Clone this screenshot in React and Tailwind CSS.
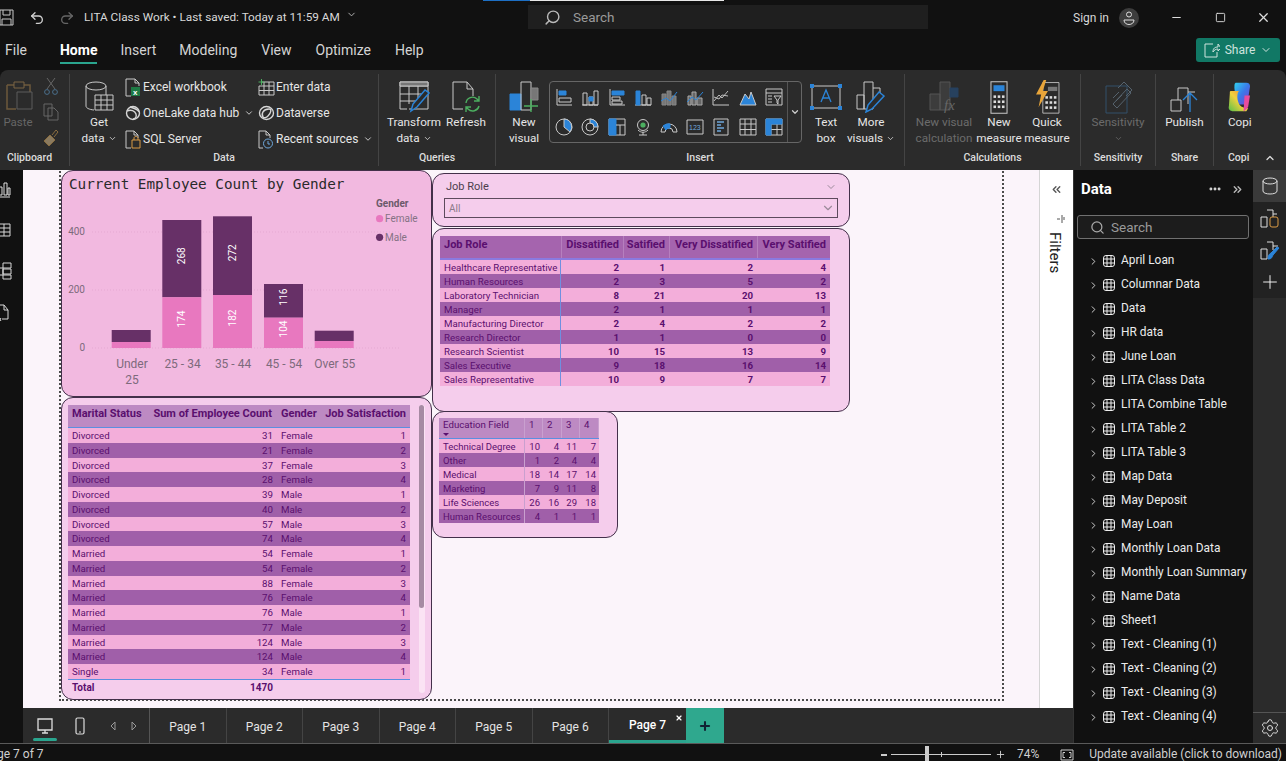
import React from 'react';
import { ChevronDown, ChevronRight, ChevronUp, ChevronsLeft, ChevronsRight, Search, Settings, Minus, Square, X, Plus, MoreHorizontal, Undo2, Redo2 } from 'lucide-react';

const BLUE = '#2b84d8';
const LINE = '#c9c9c9';

const Svg = ({ w, h, vw, vh, className, children, stroke = LINE, sw = 1 }) => (
  <svg width={w} height={h} viewBox={`0 0 ${vw || w} ${vh || h}`} fill="none" stroke={stroke} strokeWidth={sw} className={className}>
    {children}
  </svg>
);

// ribbon large icons
const PasteIcon = () => (
  <Svg w={30} h={34} stroke="#6d5a3c">
    <path d="M2 5h7M19 5h6v7M2 5v24h9" strokeWidth="1.5" />
    <path d="M9 2h10v6H9z" stroke="#7a6545" />
    <path d="M12 12h15v17H12z" stroke="#5c5c5c" fill="#2b2b2b" />
  </Svg>
);
const GetDataIcon = () => (
  <Svg w={29} h={34}>
    <ellipse cx="11" cy="6" rx="10" ry="4" />
    <path d="M1 6v20c0 2 3 3.5 8 4M21 6v9" />
    <path d="M10 15h18v15H10zM10 20h18M10 25h18M16 15v15M22 15v15" fill="#2b2b2b" />
  </Svg>
);
const TransformIcon = () => (
  <Svg w={31} h={32}>
    <path d="M1 1h28v27H10M1 1v27h7M1 5h28M1 13h26M1 20h18M10 5v18M19 5v12" />
    <path d="M1 1h28v4H1z" fill="#777" />
    <path d="M12 30l2-7 12-14 4 3-12 14z" stroke={BLUE} strokeWidth="1.5" fill="#2b2b2b" />
  </Svg>
);
const RefreshIcon = () => (
  <Svg w={29} h={32}>
    <path d="M1 1h14l6 7v7M15 1v7h6M1 1v27h10" />
    <path d="M14 22a6.5 6.5 0 0 1 11-4l1.5 1.5M27 25a6.5 6.5 0 0 1-11 3l-1.5-1.5M27 15v5h-5M14 31v-5h5" stroke="#4caf60" strokeWidth="1.4" />
  </Svg>
);
const NewVisualIcon = () => (
  <Svg w={30} h={32}>
    <path d="M1 13h11v16H1z" fill={BLUE} stroke={BLUE} />
    <path d="M12 1h10v28H12z" />
    <path d="M22 7h7v12h-7z" fill="#777" stroke="#888" />
    <path d="M22 18v13M15 25h14" stroke="#4caf60" strokeWidth="1.4" />
  </Svg>
);
const TextBoxIcon = () => (
  <Svg w={32} h={26}>
    <path d="M2 2h28v22H2z" />
    <path d="M11 18l5-12 5 12M13 14h6" stroke={BLUE} strokeWidth="1.3" />
    <g fill={BLUE} stroke="none"><rect width="4" height="4" /><rect x="28" width="4" height="4" /><rect y="22" width="4" height="4" /><rect x="28" y="22" width="4" height="4" /></g>
  </Svg>
);
const MoreVisualsIcon = () => (
  <Svg w={31} h={32}>
    <path d="M1 14h7v14H1zM8 1h9v27H8zM17 7h7v8" />
    <path d="M10 31l2-7 11-13 5 4-12 13z" stroke={BLUE} strokeWidth="1.5" fill="#2b2b2b" />
  </Svg>
);
const VisualCalcIcon = () => (
  <Svg w={30} h={32} stroke="#555">
    <path d="M1 13h10v16H1zM11 1h10v28H11z" fill="#3c3c3c" />
    <path d="M21 7h8v9h-8z" fill="#27415e" stroke="#27415e" />
    <text x="15" y="29" fontSize="15" fontStyle="italic" fontFamily="Liberation Serif, serif" fill="#666" stroke="none">fx</text>
  </Svg>
);
const NewMeasureIcon = () => (
  <Svg w={18} h={33} vw={21} vh={39}>
    <path d="M1 1h19v37H1z" strokeWidth="1.2" />
    <path d="M4 5h13v7H4z" fill={BLUE} stroke="none" />
    <g fill="#ddd" stroke="none">
      {[17, 23, 29].map((y) => [4, 9, 14].map((x) => <rect key={`${x}${y}`} x={x} y={y} width="3" height="3" />))}
    </g>
  </Svg>
);
const QuickMeasureIcon = () => (
  <Svg w={29} h={34} vw={29} vh={40}>
    <g transform="translate(8 2)">
      <path d="M1 1h19v36H1z" />
      <path d="M7 6h11v5H7z" fill="#777" stroke="none" />
      <g fill="#ddd" stroke="none">
        {[17, 23, 29].map((y) => [4, 9, 14].map((x) => <rect key={`${x}${y}`} x={x} y={y} width="3" height="3" />))}
      </g>
    </g>
    <path d="M10 0L1 17h6l-3 15 11-19H9l4-13z" fill="#e8a53a" stroke="none" />
  </Svg>
);
const SensitivityIcon = () => (
  <Svg w={34} h={34} stroke="#33506b">
    <path d="M5 6h21v27H5z" />
    <path d="M12 24l14-15 4 4-14 15zM17 8l6-6 8 8-6 6" stroke="#56636e" />
    <path d="M12 18l6-6M15 21l6-6" stroke="#56636e" />
  </Svg>
);
const PublishIcon = () => (
  <Svg w={30} h={32}>
    <path d="M1 19h10v11H1zM8 19V7h10v16M18 11h7" />
    <path d="M20 31V12M13 19l7-7 7 7" stroke={BLUE} strokeWidth="1.3" />
  </Svg>
);
const CopilotIcon = () => (
  <svg width="22" height="30" viewBox="0 0 24 40" preserveAspectRatio="none" className="block">
    <defs>
      <linearGradient id="cp1" x1="0" y1="0" x2="1" y2="1"><stop offset="0" stopColor="#2fd0f0" /><stop offset="0.5" stopColor="#3b78e8" /><stop offset="1" stopColor="#7d3fd0" /></linearGradient>
      <linearGradient id="cp2" x1="0" y1="1" x2="1" y2="0"><stop offset="0" stopColor="#58c04a" /><stop offset="0.5" stopColor="#f2d13c" /><stop offset="1" stopColor="#f07f3c" /></linearGradient>
    </defs>
    <path d="M9 1h11c3 0 4 2 4 5L21 30H9L7 8c0-4 0-7 2-7z" fill="url(#cp1)" />
    <path d="M3 12h9c-3 4-2 14 1 19 2 3 6 4 9 4l-2 4H6c-4 0-6-3-5-7l1-17c0-2 0-3 1-3z" fill="url(#cp2)" />
    <path d="M18 18h6l-2 15c-1 3-3 5-5 6l1-21z" fill="#e84b9c" />
  </svg>
);

// small list icons of the Data group
const ExcelIcon = () => (
  <Svg w={16} h={19}>
    <path d="M1 1h9l4 4v3M10 1v4h4M1 1v17h5" />
    <path d="M6 9h9v9H6z" fill="#1e7a45" stroke="none" />
    <text x="8" y="17" fontSize="8" fontWeight="700" fill="#fff" stroke="none" fontFamily="Liberation Sans, sans-serif">x</text>
  </Svg>
);
const OneLakeIcon = () => (
  <Svg w={16} h={16} stroke="#d6d6d6" sw={1.4}>
    <circle cx="8" cy="8" r="6.5" />
    <path d="M2 6c4-2 8 0 9 3s-1 5-3 5M5 2c3 1 8 2 9 5" />
  </Svg>
);
const SqlIcon = () => (
  <Svg w={16} h={19}>
    <path d="M1 1h8l4 4v3M9 1v4h4M1 1v17h5" />
    <path d="M7 10h8v8H7zM9 10V8c0-2 4-2 4 0v2" stroke="#d99a45" />
  </Svg>
);
const EnterDataIcon = () => (
  <Svg w={17} h={17}>
    <path d="M4 3h12v13H1V7M1 7h15M1 11.5h15M6 3v13M11 3v13" />
    <path d="M3.5 0v6M0.5 3h6" stroke="#4caf60" />
  </Svg>
);
const DataverseIcon = () => (
  <Svg w={17} h={16} stroke="#d6d6d6" sw={1.4}>
    <ellipse cx="8.5" cy="8" rx="7" ry="6.5" />
    <path d="M5 12c-2-3 0-8 6-8 3 0 2 4-1 7-2 2-4 2-5 1z" />
  </Svg>
);
const RecentIcon = () => (
  <Svg w={15} h={19}>
    <path d="M1 1h7l4 4v3M8 1v4h4M1 1v17h4" />
    <circle cx="10" cy="13.5" r="4.5" stroke="#6fa8dc" />
    <path d="M10 11v3h2" stroke="#6fa8dc" />
  </Svg>
);

// visual gallery
const Box = ({ children }) => <Svg w={18} h={18}>{children}</Svg>;
const gallery = [
  <Box><path d="M2 1v16h15" /><path d="M4 3h7v4H4z" fill={BLUE} stroke={BLUE} /><path d="M4 10h12v4H4z" fill="none" /></Box>,
  <Box><path d="M1 17h16M2 5h4v12H2zM8 9h4v8H8zM13 3h4v14h-4z" /><path d="M8 9h4v4H8z" fill={BLUE} stroke={BLUE} /></Box>,
  <Box><path d="M2 1v16h15" /><path d="M4 3h12v4H4z" fill={BLUE} stroke={BLUE} /><path d="M4 9h8v3H4zM4 13h10v3H4z" /></Box>,
  <Box><path d="M1 17h16" /><path d="M2 3h4v14H2z" fill={BLUE} stroke={BLUE} /><path d="M8 7h4v10H8zM13 10h4v7h-4z" /></Box>,
  <Box><path d="M2 6h4v11H2zM7 3h4v14H7zM12 8h4v9h-4z" fill="#777" stroke="#888" /><path d="M1 13l5-3 4 3 7-9" stroke={BLUE} /></Box>,
  <Box><path d="M2 8h3v9H2zM6 4h4v13H6zM11 10h5v7h-5z" fill="#666" stroke="#aaa" /><path d="M1 14l5-5 4 3 7-8" stroke={BLUE} /></Box>,
  <Box><path d="M1 1v16h16" /><path d="M2 13l5-6 3 3 6-7M2 9l5 2 3-4 6 1" strokeWidth="0.9" /></Box>,
  <Box><path d="M1 17l5-11 4 5 2-7 5 13z" fill={BLUE} stroke={LINE} /></Box>,
  <Box><path d="M1 1h16v16H1zM1 5h16" /><path d="M3 8h4M3 11h4M3 14h4M9 8h7l-3 4v4l-1-1v-3z" /></Box>,
  <Box><circle cx="9" cy="9" r="8" /><path d="M9 9V1a8 8 0 0 1 6 13z" fill={BLUE} stroke={LINE} /></Box>,
  <Box><circle cx="9" cy="9" r="8" /><circle cx="9" cy="9" r="4" /><path d="M9 1a8 8 0 0 1 8 8h-4a4 4 0 0 0-4-4z" fill={BLUE} /></Box>,
  <Box><path d="M1 1h16v16H1z" /><path d="M1 1h7v16H1z" fill={BLUE} stroke={BLUE} /><path d="M8 7h9M12 7v10" /></Box>,
  <Box><circle cx="9" cy="7" r="5.5" /><circle cx="9" cy="7" r="2.6" fill="#4caf60" stroke="none" /><path d="M4 12c3 3 7 3 10 0M9 14v3M5 17h8" /></Box>,
  <Box><path d="M1 14a8 8 0 0 1 16 0h-4a4 4 0 0 0-8 0z" /><path d="M3 8a8 8 0 0 1 7-2v4a4 4 0 0 0-4 2z" fill={BLUE} stroke={BLUE} /></Box>,
  <Box><path d="M1 2h16v14H1z" /><text x="3" y="12" fontSize="7" fill="#6fa8dc" stroke="none" fontFamily="Liberation Sans, sans-serif">123</text></Box>,
  <Box><path d="M2 1h14v16H2z" /><path d="M5 4h7M5 7h4M5 10h7M5 13h4" stroke="#6fa8dc" strokeWidth="1.3" /></Box>,
  <Box><path d="M1 1h16v16H1zM1 6h16M1 11.5h16M6 1v16M12 1v16" /></Box>,
  <Box><path d="M1 1h16v16H1zM1 6h16M1 11.5h16M6 1v16M12 1v16" stroke={LINE} /><path d="M1 1h16v5H1zM1 6h5v11H1z" fill={BLUE} stroke={BLUE} /></Box>,
];

const TableIcon = () => (
  <svg width="12" height="12" viewBox="0 0 12 12" fill="none" stroke="#eee" strokeWidth="1" className="shrink-0">
    <rect x="0.5" y="0.5" width="11" height="11" rx="2.5" />
    <path d="M4 0.5v11M8 0.5v11M0.5 4h11M0.5 8h11" />
  </svg>
);

const Big = ({ icon, lines, w, chevron, muted, className = '' }) => (
  <div className={`flex flex-col items-center shrink-0 ${className}`} style={{ width: w }}>
    <div className="h-[34px] flex items-center justify-center">{icon}</div>
    <div className={`text-[11.7px] leading-[16px] text-center whitespace-nowrap ${muted ? 'text-[#6b6b6b]' : 'text-[#e6e6e6]'}`}>
      {lines.map((l, i) => (
        <div key={l} className="flex items-center justify-center gap-[3px] h-[16px]">
          {l}
          {chevron && i === lines.length - 1 && <ChevronDown size={9} />}
        </div>
      ))}
    </div>
  </div>
);

const Group = ({ label, w, sep = true, children, labelClass = '' }) => (
  <div className={`h-[92px] mt-[4px] shrink-0 flex flex-col ${sep ? 'border-r border-[#444]' : ''}`} style={{ width: w }}>
    <div className="h-[71px] flex items-start">{children}</div>
    <div className={`text-[10.5px] leading-[16px] mt-[5px] text-center font-medium text-[#dcdcdc] ${labelClass}`}>{label}</div>
  </div>
);

const ListRow = ({ icon, text, chevron }) => (
  <div className="h-[26px] flex items-center text-[12px] text-[#e6e6e6] whitespace-nowrap">
    <div className="w-[18px] shrink-0 flex items-center">{icon}</div>
    {text}
    {chevron && <ChevronDown size={10} className="ml-[5px]" />}
  </div>
);

const Ribbon = () => (
  <div className="h-[100px] bg-[#2b2b2b] rounded-t-[8px] flex shrink-0">
    <Group label="Clipboard" w={70} labelClass="pr-[10px]">
      <div className="w-[40px] mt-[6px] flex flex-col items-center">
        <div className="h-[34px] flex items-center"><PasteIcon /></div>
        <span className="text-[11.5px] leading-[16px] pr-[4px] text-[#666]">Paste</span>
      </div>
      <div className="flex flex-col items-center gap-[8px] mt-[3px] ml-[3px]">
        <Svg w={14} h={18} stroke="#666"><path d="M3 1l8 11M11 1L3 12" /><circle cx="3" cy="15" r="2.4" stroke="#4a6f8c" /><circle cx="11" cy="15" r="2.4" stroke="#4a6f8c" /></Svg>
        <Svg w={16} h={18} stroke="#666"><path d="M1 1h8v12H1zM5 5h6l4 4v8H5z" fill="#2b2b2b" /></Svg>
        <Svg w={16} h={18} stroke="#8a6d3f"><path d="M9 6l4-5 2 2-4 5" /><path d="M1 12l6-6 5 5-6 6z" fill="#8a7a5f" /></Svg>
      </div>
    </Group>
    <Group label="Data" w={309}>
      <div className="ml-[4px] mt-[6px]"><Big icon={<GetDataIcon />} lines={['Get', 'data']} chevron w={50} /></div>
      <div className="ml-[1px] w-[133px]">
        <ListRow icon={<ExcelIcon />} text="Excel workbook" />
        <ListRow icon={<OneLakeIcon />} text="OneLake data hub" chevron />
        <ListRow icon={<SqlIcon />} text="SQL Server" />
      </div>
      <div className="w-[118px]">
        <ListRow icon={<EnterDataIcon />} text="Enter data" />
        <ListRow icon={<DataverseIcon />} text="Dataverse" />
        <ListRow icon={<RecentIcon />} text="Recent sources" chevron />
      </div>
    </Group>
    <Group label="Queries" w={117}>
      <div className="ml-[9px] mt-[6px] flex gap-[6px]">
        <Big icon={<TransformIcon />} lines={['Transform', 'data']} chevron w={52} />
        <Big icon={<RefreshIcon />} lines={['Refresh']} w={40} />
      </div>
    </Group>
    <Group label="Insert" w={409}>
      <div className="ml-[8px] mt-[6px]"><Big icon={<NewVisualIcon />} lines={['New', 'visual']} w={40} /></div>
      <div className="ml-[5px] mt-[7px] w-[253px] h-[62px] border border-[#666] rounded-[4px] flex">
        <div className="w-[237px] grid grid-cols-9 grid-rows-2 items-center justify-items-center pl-[1px]">
          {gallery.map((g, i) => <div key={i} className="flex">{g}</div>)}
        </div>
        <div className="flex-1 border-l border-[#555] flex items-center justify-center"><ChevronDown size={10} strokeWidth={3} className="text-[#ccc]" /></div>
      </div>
      <div className="ml-[6px] mt-[6px] flex gap-[2px]">
        <Big icon={<TextBoxIcon />} lines={['Text', 'box']} w={36} />
        <Big icon={<MoreVisualsIcon />} lines={['More', 'visuals']} chevron w={50} />
      </div>
    </Group>
    <Group label="Calculations" w={176}>
      <div className="ml-[7px] mt-[6px] flex">
        <Big icon={<VisualCalcIcon />} lines={['New visual', 'calculation']} muted w={64} />
        <Big icon={<NewMeasureIcon />} lines={['New', 'measure']} w={46} />
        <Big icon={<QuickMeasureIcon />} lines={['Quick', 'measure']} w={50} />
      </div>
    </Group>
    <Group label="Sensitivity" w={75}>
      <div className="mt-[6px] w-full">
        <Big icon={<SensitivityIcon />} lines={['Sensitivity', '']} chevron muted w="100%" />
      </div>
    </Group>
    <Group label="Share" w={58}>
      <div className="mt-[6px] w-full"><Big icon={<PublishIcon />} lines={['Publish']} w="100%" /></div>
    </Group>
    <div className="h-[92px] mt-[4px] flex-1 flex flex-col">
      <div className="h-[71px] pt-[8px] pl-[14px] overflow-hidden">
        <CopilotIcon />
        <div className="text-[11.7px] leading-[16px] text-[#e6e6e6] mt-[2px]">Copi</div>
      </div>
      <div className="flex items-center mt-[5px] pl-[14px] gap-[15px] text-[10.5px] leading-[16px] font-medium text-[#dcdcdc]">
        Copi
        <ChevronUp size={12} strokeWidth={2.5} />
      </div>
    </div>
  </div>
);

const TitleBar = () => (
  <div className="h-[35px] flex items-center relative shrink-0">
    <div className="absolute top-0 left-[483px] w-[47px] h-[1px] bg-[#1d6fc4]" />
    <div className="absolute top-0 left-[530px] w-[194px] h-[1px] bg-[#e8e8e8]" />
    <Svg w={15} h={17} className="shrink-0 ml-[-1px]">
      <path d="M1 1h13v15H1zM4 1v5h7V1M3 16v-6h9v6" />
    </Svg>
    <Undo2 size={16} className="ml-[15px] text-[#d0d0d0]" />
    <Redo2 size={16} className="ml-[14px] text-[#666]" />
    <span className="ml-[9px] text-[11.8px] text-[#d8d8d8] whitespace-nowrap">LITA Class Work • Last saved: Today at 11:59 AM</span>
    <ChevronDown size={11} className="ml-[6px] mt-[-6px] text-[#bbb]" />
    <div className="absolute left-[528px] top-[5px] w-[400px] h-[24px] bg-[#1f1f1f] flex items-center pl-[16px]">
      <Search size={17} className="text-[#bbb] scale-x-[-1]" />
      <span className="ml-[12px] text-[13.5px] text-[#9a9a9a]">Search</span>
    </div>
    <div className="ml-auto flex items-center h-full">
      <span className="text-[12px] text-[#d8d8d8]">Sign in</span>
      <div className="ml-[10px] w-[20px] h-[20px] rounded-full bg-[#3d3d3d] flex items-center justify-center">
        <Svg w={12} h={14} stroke="#ddd"><circle cx="6" cy="3.5" r="2.5" /><path d="M1 9h10c0 6-10 6-10 0z" /></Svg>
      </div>
      <Minus size={13} className="ml-[31px] text-[#ddd]" />
      <Square size={11} className="ml-[32px] text-[#ddd]" />
      <X size={15} className="ml-[30px] mr-[15px] text-[#ddd]" />
    </div>
  </div>
);

const TabBar = () => (
  <div className="h-[35px] flex items-start relative shrink-0 text-[14px] leading-[30px] text-[#d4d4d4]">
    <span className="ml-[5px]">File</span>
    <span className="ml-[33px] font-bold text-white border-b-2 border-[#2aa58e] h-[29px]">Home</span>
    <span className="ml-[23px]">Insert</span>
    <span className="ml-[23px]">Modeling</span>
    <span className="ml-[24px]">View</span>
    <span className="ml-[24px]">Optimize</span>
    <span className="ml-[24px]">Help</span>
    <div className="ml-auto mr-[6px] mt-[3px] w-[84px] h-[24px] rounded-[3px] bg-[#117865] flex items-center justify-center gap-[5px] text-[12px] leading-[24px] text-[#cfe3de]">
      <Svg w={16} h={15} stroke="#cfe3de"><path d="M9 1h-8v13h12V9M9 9c0-4 2-5 5-5V1l3 4-3 3V6c-2 0-4 1-5 3z" /></Svg>
      Share
      <ChevronDown size={12} />
    </div>
  </div>
);

const LeftRail = () => (
  <div className="w-[23px] shrink-0 bg-[#111] flex flex-col gap-[24px] pt-[12px] overflow-hidden">
    <Svg w={12} h={16} className="ml-[-1px]" stroke="#e0e0e0">
      <path d="M0 5h3v8H0zM5 1h3v12H5zM9 6h2v7H9zM0 15h11" />
    </Svg>
    <Svg w={12} h={16} className="ml-[-1px]" stroke="#d8d8d8"><path d="M-1 2h12v12H-1zM-1 6h12M-1 10h12M5 2v12" /></Svg>
    <Svg w={13} h={18} className="ml-[-1px]" stroke="#d8d8d8"><path d="M-1 6h5v7h-5zM4 1h8v5H4zM4 7h8v5H4zM4 13h8v4H4z" /></Svg>
    <Svg w={11} h={18} className="ml-[-1px]" stroke="#d8d8d8"><path d="M-1 1h6l4 5v9H3M5 1v5h4" /><path d="M0 14l2 3M2 14l-2 3" /></Svg>
  </div>
);

// report canvas
const ChartCard = () => (
  <div className="absolute left-[38px] top-0 w-[371px] h-[227px] rounded-[12px] border border-[#43304a] bg-[#f2b9e0] overflow-hidden">
    <div className="h-[28px] pl-[7px] pt-[3px] font-['DejaVu_Sans_Mono',monospace] text-[14.3px] leading-[20px] text-[#2a2a2a] whitespace-nowrap">Current Employee Count by Gender</div>
    <svg width="369" height="197" viewBox="62 199 369 197" fontFamily="Roboto, sans-serif" className="block">
      {[232, 290, 348].map((y) => <path key={y} d={`M92 ${y}H400`} stroke="#e5a9d2" strokeDasharray="1 2" />)}
      {[['400', 231.7], ['200', 289.7], ['0', 347.7]].map(([t, y]) => <text key={t} x="85" y={y + 3.5} textAnchor="end" fontSize="10" fill="#7d6a7c">{t}</text>)}
      {[[111.7, 330, 342], [162.3, 220, 297.3], [213, 216.3, 295], [264, 284, 317.7], [314.7, 330.7, 341]].map(([x, top, mid]) => (
        <g key={x}>
          <rect x={x} y={top} width="39" height={mid - top} fill="#673067" />
          <rect x={x} y={mid} width="39" height={348 - mid} fill="#e878bf" />
        </g>
      ))}
      {[['268', 181.8, 255.7], ['174', 181.8, 319], ['272', 232.6, 252.7], ['182', 232.6, 318], ['116', 283.6, 297], ['104', 283.6, 329]].map(([t, x, y]) => (
        <text key={t} transform={`translate(${x} ${y}) rotate(-90)`} y="3.5" textAnchor="middle" fontSize="10" fill="#fff">{t}</text>
      ))}
      <g fontSize="12" fill="#7d6a7c" textAnchor="middle">
        <text x="132" y="368">Under</text>
        <text x="132" y="384">25</text>
        <text x="182.5" y="368">25 - 34</text>
        <text x="233" y="368">35 - 44</text>
        <text x="284" y="368">45 - 54</text>
        <text x="334.7" y="368">Over 55</text>
      </g>
      <text x="376" y="207" fontSize="10" fontWeight="700" fill="#6b5a6a">Gender</text>
      <circle cx="379.6" cy="218.7" r="3.6" fill="#e878bf" />
      <text x="385" y="222" fontSize="10" fill="#857284">Female</text>
      <circle cx="379.6" cy="237.3" r="3.6" fill="#673067" />
      <text x="385" y="241" fontSize="10" fill="#857284">Male</text>
    </svg>
  </div>
);

const maritalRows = [
  ['Divorced', 31, 'Female', 1], ['Divorced', 21, 'Female', 2], ['Divorced', 37, 'Female', 3], ['Divorced', 28, 'Female', 4],
  ['Divorced', 39, 'Male', 1], ['Divorced', 40, 'Male', 2], ['Divorced', 57, 'Male', 3], ['Divorced', 74, 'Male', 4],
  ['Married', 54, 'Female', 1], ['Married', 54, 'Female', 2], ['Married', 88, 'Female', 3], ['Married', 76, 'Female', 4],
  ['Married', 76, 'Male', 1], ['Married', 77, 'Male', 2], ['Married', 124, 'Male', 3], ['Married', 124, 'Male', 4],
  ['Single', 34, 'Female', 1],
];

const MaritalTable = () => (
  <div className="absolute left-[38px] top-[227px] w-[371px] h-[303px] rounded-[12px] border border-[#43304a] bg-[#f5cdec] pl-[6px] pt-[7px]">
    <div className="w-[342px] text-[#5a0f6e]">
      <div className="h-[23px] pb-[5px] bg-[#bd8ac3] border-b border-[#5b8fe0] grid grid-cols-[79px_130px_45px_88px] items-center text-[11px] font-bold leading-none whitespace-nowrap">
        <span className="pl-[4px]">Marital Status</span>
        <span className="text-right pr-[5px]">Sum of Employee Count</span>
        <span className="pl-[4px]">Gender</span>
        <span className="text-right pr-[4px]">Job Satisfaction</span>
      </div>
      {maritalRows.map((r, i) => (
        <div key={i} className={`h-[14.75px] pt-[1px] grid grid-cols-[79px_130px_45px_88px] items-center text-[9.7px] leading-none ${i % 2 ? 'bg-[#a05fa9]' : 'bg-[#f3aeda]'}`}>
          <span className="pl-[4px]">{r[0]}</span>
          <span className="text-right pr-[4px]">{r[1]}</span>
          <span className="pl-[4px]">{r[2]}</span>
          <span className="text-right pr-[4px]">{r[3]}</span>
        </div>
      ))}
      <div className="h-[17px] border-t border-[#5b8fe0] grid grid-cols-[79px_130px_45px_88px] items-center text-[10px] font-bold leading-none">
        <span className="pl-[4px]">Total</span>
        <span className="text-right pr-[4px]">1470</span>
      </div>
    </div>
    <div className="absolute left-[357px] top-[7px] w-[6px] h-[288px] rounded-full bg-[#fbe3f4]">
      <div className="w-[5px] h-[203px] rounded-full bg-[#a68aa3]" />
    </div>
  </div>
);

const JobSlicer = () => (
  <div className="absolute left-[409px] top-[3px] w-[418px] h-[54px] rounded-[12px] border border-[#43304a] bg-[#f5cdec] pl-[11px] pr-[11px]">
    <div className="h-[24px] pt-[2px] flex items-center justify-between pl-[2px] pr-[1px] text-[11px] text-[#4c3e4c]">
      Job Role
      <ChevronDown size={12} className="text-[#9b8a9a]" />
    </div>
    <div className="h-[20px] border border-[#5d4a5d] flex items-center justify-between pl-[4px] pr-[2px] text-[10px] text-[#8a7a88]">
      All
      <ChevronDown size={14} className="text-[#9b8a9a]" />
    </div>
  </div>
);

const roleRows = [
  ['Healthcare Representative', 2, 1, 2, 4], ['Human Resources', 2, 3, 5, 2], ['Laboratory Technician', 8, 21, 20, 13],
  ['Manager', 2, 1, 1, 1], ['Manufacturing Director', 2, 4, 2, 2], ['Research Director', 1, 1, 0, 0],
  ['Research Scientist', 10, 15, 13, 9], ['Sales Executive', 9, 18, 16, 14], ['Sales Representative', 10, 9, 7, 7],
];

const RoleMatrix = () => (
  <div className="absolute left-[409px] top-[58px] w-[418px] h-[184px] rounded-[12px] border border-[#43304a] bg-[#f5cdec] pl-[7px] pt-[7px]">
    <div className="w-[390px] text-[#5a0f6e]">
      <div className="h-[24px] bg-[#a564ae] border-b-2 border-[#8a7ae0] grid grid-cols-[121px_62px_46px_88px_73px] items-center text-[11px] font-bold leading-none whitespace-nowrap">
        <span className="pl-[4px] pb-[5px]">Job Role</span>
        {['Dissatified', 'Satified', 'Very Dissatified', 'Very Satified'].map((h) => (
          <span key={h} className="h-full pb-[5px] flex items-center justify-end pr-[4px] border-l border-[#b67fbe]">{h}</span>
        ))}
      </div>
      {roleRows.map((r, i) => (
        <div key={r[0]} className={`h-[14px] grid grid-cols-[121px_62px_46px_88px_73px] items-center leading-none text-[9.7px] ${i % 2 ? 'bg-[#a05fa9]' : 'bg-[#f3aeda]'}`}>
          <span className="pl-[4px] pt-[1px] h-full flex items-center border-r border-[#6f8fe0] whitespace-nowrap">{r[0]}</span>
          {r.slice(1).map((v, j) => <span key={j} className="pt-[1px] text-right pr-[4px] font-bold">{v}</span>)}
        </div>
      ))}
    </div>
  </div>
);

const eduRows = [
  ['Technical Degree', 10, 4, 11, 7], ['Other', 1, 2, 4, 4], ['Medical', 18, 14, 17, 14],
  ['Marketing', 7, 9, 11, 8], ['Life Sciences', 26, 16, 29, 18], ['Human Resources', 4, 1, 1, 1],
];

const EduMatrix = () => (
  <div className="absolute left-[409px] top-[241px] w-[186px] h-[127px] rounded-[12px] border border-[#43304a] bg-[#f5cdec] pl-[6px] pt-[6px]">
    <div className="w-[160px] text-[#5a0f6e]">
      <div className="relative h-[21px] bg-[#bd8ac3] border-b border-[#5b8fe0] grid grid-cols-[86px_18px_19px_18px_19px] text-[9.7px] leading-[14px]">
        <span className="pl-[4px] border-r border-[#c9a0cf]">Education Field</span>
        {[1, 2, 3, 4].map((h) => <span key={h} className="pl-[4px] border-r border-[#c9a0cf]">{h}</span>)}
        <span className="absolute left-[4px] top-[15px] w-0 h-0 border-x-[3px] border-x-transparent border-t-[3px] border-t-[#5a0f6e]" />
      </div>
      {eduRows.map((r, i) => (
        <div key={r[0]} className={`h-[14px] grid grid-cols-[86px_18px_19px_18px_19px] items-center text-[9.5px] leading-none ${i % 2 ? 'bg-[#a05fa9]' : 'bg-[#f3aeda]'}`}>
          <span className="pl-[4px] pt-[1px] h-full flex items-center border-r border-[#c9a0cf] whitespace-nowrap">{r[0]}</span>
          {r.slice(1).map((v, j) => <span key={j} className="pt-[1px] text-right pr-[3px]">{v}</span>)}
        </div>
      ))}
    </div>
  </div>
);

const Canvas = () => (
  <div className="h-[538px] relative overflow-hidden bg-[#fbf4fa]">
    <div className="absolute left-[36px] top-[-20px] w-[945px] h-[551px] border-2 border-dotted border-[#4a4a4a]" />
    <ChartCard />
    <MaritalTable />
    <JobSlicer />
    <RoleMatrix />
    <EduMatrix />
  </div>
);

const pages = ['Page 1', 'Page 2', 'Page 3', 'Page 4', 'Page 5', 'Page 6'];

const PageTabs = () => (
  <div className="h-[35px] bg-[#2b2b2b] flex text-[12px] text-[#e4e4e4]">
    <div className="w-[127px] flex items-center border-r border-[#555] shrink-0 relative">
      <Svg w={18} h={18} className="ml-[13px]" stroke="#ddd" sw={1.3}><path d="M2 2h14v11H2zM6 16h6M9 13v3" /></Svg>
      <div className="absolute left-[10px] bottom-[2px] w-[24px] h-[3px] rounded bg-[#2aa58e]" />
      <Svg w={10} h={18} className="ml-[21px]" stroke="#ddd" sw={1.2}><rect x="1" y="1" width="8" height="16" rx="1.5" /><path d="M4 15h2" /></Svg>
      <Svg w={6} h={10} className="ml-[25px]" stroke="#999"><path d="M5 1L1 5l4 4z" /></Svg>
      <Svg w={6} h={10} className="ml-[15px]" stroke="#999"><path d="M1 1l4 4-4 4z" /></Svg>
    </div>
    {pages.map((p) => (
      <div key={p} className="w-[76.5px] shrink-0 pt-[2px] flex items-center justify-center border-r border-[#444]">{p}</div>
    ))}
    <div className="w-[77px] shrink-0 pt-[2px] relative flex items-center justify-center border-b-[3px] border-[#2aa58e] font-medium text-white">
      Page 7
      <X size={8} strokeWidth={3.5} className="absolute right-[3px] top-[6px]" />
    </div>
    <div className="w-[38px] shrink-0 bg-[#2fa88e] flex items-center justify-center">
      <Plus size={14} strokeWidth={3.5} className="text-[#123]" />
    </div>
  </div>
);

const FiltersPane = () => (
  <div className="w-[34px] shrink-0 bg-white border-l border-[#d5d5d5] flex flex-col items-center">
    <ChevronsLeft size={13} strokeWidth={2.5} className="mt-[13px] text-[#555]" />
    <Svg w={10} h={10} className="mt-[17px] ml-[8px]" stroke="#555"><path d="M1 6h3M6 2v8M8 4v3" /></Svg>
    <div className="mt-[9px] ml-[-3px] [writing-mode:vertical-rl] text-[15px] leading-[16px] text-[#222]">Filters</div>
  </div>
);

const tables = ['April Loan', 'Columnar Data', 'Data', 'HR data', 'June Loan', 'LITA Class Data', 'LITA Combine Table', 'LITA Table 2', 'LITA Table 3', 'Map Data', 'May Deposit', 'May Loan', 'Monthly Loan Data', 'Monthly Loan Summary', 'Name Data', 'Sheet1', 'Text - Cleaning (1)', 'Text - Cleaning (2)', 'Text - Cleaning (3)', 'Text - Cleaning (4)'];

const DataPane = () => (
  <div className="w-[180px] shrink-0 bg-[#111] border-l border-[#333] flex flex-col">
    <div className="h-[38px] flex items-center pl-[7px] pr-[9px]">
      <span className="text-[15px] font-bold text-white">Data</span>
      <MoreHorizontal size={14} strokeWidth={3} className="ml-auto text-[#ddd]" />
      <ChevronsRight size={13} strokeWidth={2.5} className="ml-[9px] text-[#bbb]" />
    </div>
    <div className="ml-[3px] mt-[7px] w-[172px] h-[24px] rounded-[3px] border border-[#707070] bg-[#1c1c1c] flex items-center pl-[12px]">
      <Search size={15} className="text-[#aaa]" />
      <span className="ml-[6px] text-[13.5px] text-[#9a9a9a]">Search</span>
    </div>
    <div className="mt-[10px]">
      {tables.map((t) => (
        <div key={t} className="h-[24px] flex items-center pl-[14px] text-[11.9px] text-[#ececec] whitespace-nowrap">
          <ChevronRight size={11} className="text-[#ddd] mr-[4px] shrink-0" />
          <TableIcon />
          <span className="ml-[6px]">{t}</span>
        </div>
      ))}
    </div>
  </div>
);

const RightRail = () => (
  <div className="flex-1 bg-[#2b2b2b] flex flex-col">
    <div className="bg-[#222] h-[128px] flex flex-col items-center">
      <div className="h-[32px] w-full bg-[#3a3a3a] flex items-center justify-center">
        <Svg w={16} h={18} stroke="#ddd"><ellipse cx="8" cy="4" rx="7" ry="3" /><path d="M1 4v10c0 4 14 4 14 0V4" /></Svg>
      </div>
      <Svg w={20} h={20} className="mt-[6px]" stroke="#ddd"><path d="M1 9h6v10H1zM7 2h6v7M13 6h4" /><rect x="10" y="9" width="8" height="10" rx="2" stroke="#d99a45" /></Svg>
      <Svg w={20} h={20} className="mt-[12px]" stroke="#ddd"><path d="M1 9h6v10H1zM7 2h6v8M13 6h5" /><path d="M8 19c4 0 4-2 5-4l6-7-2-1-6 6c-2 1-3 3-3 6z" fill={BLUE} stroke={BLUE} /></Svg>
      <Plus size={22} strokeWidth={1} className="mt-[11px] text-white" />
    </div>
    <div className="mt-auto h-[31px] border-t border-[#555] flex items-center justify-center">
      <Settings size={20} strokeWidth={1.2} className="text-[#ddd]" />
    </div>
  </div>
);

const StatusBar = () => (
  <div className="h-[17px] flex items-start pt-[4px] text-[12px] leading-[13px] text-[#d0d0d0] whitespace-nowrap overflow-hidden">
    <span className="ml-[-17px]">Page 7 of 7</span>
    <div className="ml-auto flex items-center">
      <span className="w-[6px] h-[2px] bg-[#ccc]" />
      <div className="relative ml-[4px] w-[100px] h-[1px] bg-[#ccc]">
        <span className="absolute left-[34px] top-[-8px] w-[4px] h-[17px] bg-[#ccc]" />
        <span className="absolute left-[50px] top-[-2px] w-[1px] h-[5px] bg-[#ccc]" />
      </div>
      <Plus size={11} strokeWidth={2} className="ml-[4px]" />
      <span className="ml-[11px]">74%</span>
      <Svg w={14} h={12} className="ml-[21px]" stroke="#ccc"><path d="M1 1h12v10H1z" /><path d="M5 3.5H3v5h2M9 3.5h2v5H9" /></Svg>
      <span className="ml-[15px] mr-[4px]">Update available (click to download)</span>
    </div>
  </div>
);

function FiltersColumn() {
  return (
    <div className="w-[34px] shrink-0 flex flex-col">
      <div className="h-[538px] flex"><FiltersPane /></div>
      <div className="h-[35px] bg-[#2b2b2b]" />
    </div>
  );
}

export default function App() {
  return (
    <div className="w-[1286px] h-[761px] overflow-hidden bg-[#111] flex flex-col font-['Roboto',sans-serif]">
      <TitleBar />
      <TabBar />
      <Ribbon />
      <div className="h-[574px] flex shrink-0 border-b border-[#5a5a5a]">
        <LeftRail />
        <div className="w-[1016px] shrink-0 flex flex-col">
          <Canvas />
          <PageTabs />
        </div>
        <FiltersColumn />
        <DataPane />
        <RightRail />
      </div>
      <StatusBar />
    </div>
  );
}
